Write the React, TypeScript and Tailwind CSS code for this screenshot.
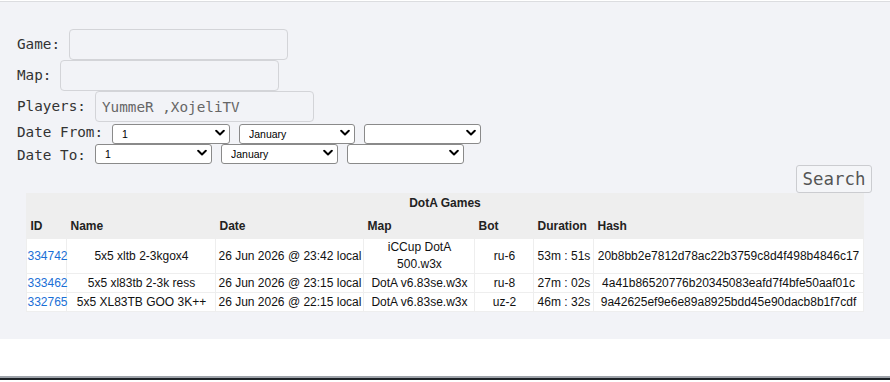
import type { ReactNode } from "react";

const mono = "font-['DejaVu_Sans_Mono','Liberation_Mono',monospace]";

function Chevron() {
  return (
    <svg
      className="pointer-events-none absolute right-[5px] top-1/2 -translate-y-1/2"
      width="10"
      height="7"
      viewBox="0 0 10 7"
    >
      <path d="M1.2 1.3 L5 5 L8.8 1.3" fill="none" stroke="#000" strokeWidth="2" strokeLinecap="round" strokeLinejoin="round" />
    </svg>
  );
}

function Select({ value, w = "w-[117px]" }: { value: string; w?: string }) {
  return (
    <div className="relative">
      <select
        defaultValue={value}
        className={`h-[20px] ${w} appearance-none rounded-[3px] border border-[#8a8a8a] bg-white pl-[9px] text-[10.5px] leading-[18px] text-black font-['Liberation_Sans',Arial,sans-serif] outline-none`}
      >
        <option value={value}>{value}</option>
      </select>
      <Chevron />
    </div>
  );
}

function Row({ label, w, children }: { label: string; w: string; children: ReactNode }) {
  return (
    <div className="flex h-[31px] items-center gap-[9px]">
      <span className={`${w} whitespace-nowrap text-[14.3px] text-[#333]`}>{label}</span>
      {children}
    </div>
  );
}

function TextBox({ value }: { value?: string }) {
  return (
    <input
      type="text"
      defaultValue={value}
      className={`${mono} h-[31px] w-[219px] rounded-[4px] border border-[#d3d4d8] bg-transparent px-[6px] text-[14.3px] text-[#666] outline-none`}
    />
  );
}

const games = [
  {
    id: "334742",
    name: "5x5 xltb 2-3kgox4",
    date: "26 Jun 2026 @ 23:42 local",
    map: "iCCup DotA 500.w3x",
    bot: "ru-6",
    dur: "53m : 51s",
    hash: "20b8bb2e7812d78ac22b3759c8d4f498b4846c17",
  },
  {
    id: "333462",
    name: "5x5 xl83tb 2-3k ress",
    date: "26 Jun 2026 @ 23:15 local",
    map: "DotA v6.83se.w3x",
    bot: "ru-8",
    dur: "27m : 02s",
    hash: "4a41b86520776b20345083eafd7f4bfe50aaf01c",
  },
  {
    id: "332765",
    name: "5x5 XL83TB GOO 3K++",
    date: "26 Jun 2026 @ 22:15 local",
    map: "DotA v6.83se.w3x",
    bot: "uz-2",
    dur: "46m : 32s",
    hash: "9a42625ef9e6e89a8925bdd45e90dacb8b1f7cdf",
  },
];

const heads = ["ID", "Name", "Date", "Map", "Bot", "Duration", "Hash"];

export default function App() {
  return (
    <div className="h-[382px] w-[890px] overflow-hidden bg-white">
      <div className="h-px bg-white" />
      <div className="border-t border-[#dcdde0] bg-[#f2f3f7] pb-[27px] pt-[27px]">
        <div className={`${mono} px-[17px]`}>
          <Row label="Game:" w="w-[43px]">
            <TextBox />
          </Row>
          <Row label="Map:" w="w-[34px]">
            <TextBox />
          </Row>
          <Row label="Players:" w="w-[69px]">
            <TextBox value="YummeR ,XojeliTV" />
          </Row>
          <div className="flex h-[22px] items-center gap-[9px]">
            <span className="w-[86px] whitespace-nowrap text-[14.3px] text-[#333]">Date From:</span>
            <div className="flex gap-[9px]">
              <Select value="1" w="w-[118px]" />
              <Select value="January" w="w-[116px]" />
              <Select value="" />
            </div>
          </div>
          <div className="flex h-[21px] items-end gap-[9px]">
            <span className="w-[69px] whitespace-nowrap text-[14.3px] leading-[20px] text-[#333]">Date To:</span>
            <div className="flex gap-[9px]">
              <Select value="1" />
              <Select value="January" />
              <Select value="" />
            </div>
          </div>
          <div className="flex justify-end pr-px">
            <button className="h-[28px] w-[76px] rounded-[3px] border border-[#cbccd0] bg-[#f4f5f8] text-[17.4px] text-[#555]">
              Search
            </button>
          </div>
        </div>

        <table className="mx-auto w-[837px] table-fixed border-separate border-spacing-[1px] bg-[#eeeeee] text-[12px] text-[#111] font-['Liberation_Sans',Arial,sans-serif]">
          <colgroup>
            <col className="w-[39px]" />
            <col className="w-[148px]" />
            <col className="w-[147px]" />
            <col className="w-[110px]" />
            <col className="w-[58px]" />
            <col className="w-[59px]" />
            <col className="w-[268px]" />
          </colgroup>
          <thead>
            <tr>
              <th colSpan={7} className="h-[18px] p-0 text-center font-bold leading-[16px] text-[#222]">
                DotA Games
              </th>
            </tr>
            <tr>
              {heads.map((h) => (
                <th key={h} className="h-[25px] px-[3px] py-0 text-left font-bold text-[#222]">
                  {h}
                </th>
              ))}
            </tr>
          </thead>
          <tbody>
            {games.map((g, i) => (
              <tr key={g.id} className="bg-white">
                <td className="h-[18px] whitespace-nowrap px-0 py-0 text-left leading-[16px]">
                  <a href="#" className="text-[#1a6fd6]">
                    {g.id}
                  </a>
                </td>
                <td className="whitespace-nowrap px-px py-0 text-center leading-[16px]">{g.name}</td>
                <td className="whitespace-nowrap px-px py-0 text-center leading-[16px]">{g.date}</td>
                <td className={`px-px py-0 text-center ${i === 0 ? "leading-[17px]" : "leading-[16px]"}`}>{g.map}</td>
                <td className="px-px py-0 text-center leading-[16px]">{g.bot}</td>
                <td className="whitespace-nowrap px-px py-0 text-center leading-[16px]">{g.dur}</td>
                <td className="whitespace-nowrap px-px py-0 text-center leading-[16px]">{g.hash}</td>
              </tr>
            ))}
          </tbody>
        </table>
      </div>
      <div className="h-[37px] bg-white" />
      <div className="h-[2px] bg-[#9ea3aa]" />
      <div className="h-[2px] bg-[#1d2127]" />
    </div>
  );
}
